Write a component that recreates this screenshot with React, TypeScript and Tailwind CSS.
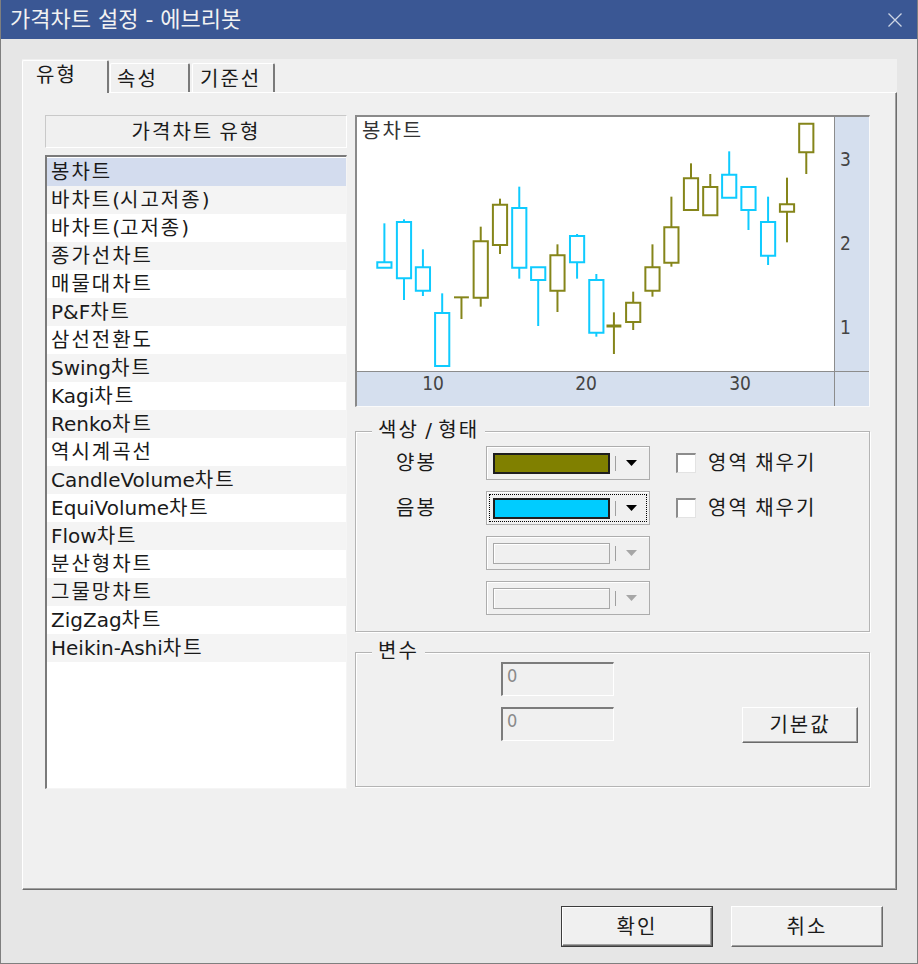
import React from 'react';

type Candle = [number, number, number, number, number, 'c' | 'o', boolean?];

// coordinates taken in the chart's own units (plot area 21..1432 x 21..783)
const candles: Candle[] = [
  [102, 340, 457, 473, 473, 'c'],
  [160, 328, 336, 505, 570, 'c'],
  [216, 418, 472, 542, 558, 'c'],
  [273, 550, 609, 768, 768, 'c'],
  [330, 562, 562, 562, 627, 'o'],
  [387, 350, 394, 563, 590, 'o'],
  [444, 266, 284, 405, 432, 'o'],
  [501, 230, 294, 473, 506, 'c'],
  [557, 472, 472, 510, 648, 'c'],
  [614, 403, 436, 542, 606, 'o'],
  [672, 372, 378, 457, 506, 'c'],
  [729, 492, 510, 668, 680, 'c'],
  [781, 607, 648, 648, 732, 'o', true],
  [838, 545, 578, 636, 660, 'o'],
  [895, 403, 472, 542, 560, 'o'],
  [951, 260, 352, 458, 470, 'o'],
  [1009, 160, 205, 300, 300, 'o'],
  [1066, 192, 231, 316, 316, 'o'],
  [1122, 124, 194, 263, 263, 'c'],
  [1179, 231, 231, 300, 360, 'c'],
  [1237, 260, 336, 437, 465, 'c'],
  [1293, 203, 283, 305, 397, 'o'],
  [1350, 41, 41, 127, 192, 'o'],
];

const chartTypes = [
  '봉차트',
  '바차트(시고저종)',
  '바차트(고저종)',
  '종가선차트',
  '매물대차트',
  'P&F차트',
  '삼선전환도',
  'Swing차트',
  'Kagi차트',
  'Renko차트',
  '역시계곡선',
  'CandleVolume차트',
  'EquiVolume차트',
  'Flow차트',
  '분산형차트',
  '그물망차트',
  'ZigZag차트',
  'Heikin-Ashi차트',
];

// hangul runs get a little extra spacing so they take the width of the dialog font
const T = ({ children }: { children: string }) => (
  <span>
    {children.split(/([\uAC00-\uD7A3]+)/).map((p, i) =>
      i % 2 ? (
        <span key={i} className="tracking-[2px]">
          {p}
        </span>
      ) : (
        p
      )
    )}
  </span>
);

const Candles = () => (
  <svg className="absolute inset-0 w-full h-full" viewBox="21 21 1411 762" preserveAspectRatio="none">
    {candles.map(([x, wt, bt, bb, wb, k, thick], i) => {
      const color = k === 'c' ? '#0fcbff' : '#85851a';
      return (
        <g key={i} stroke={color} fill="none">
          {wt < bt && <line x1={x} x2={x} y1={wt} y2={bt} strokeWidth={2} vectorEffect="non-scaling-stroke" />}
          {wb > bb && <line x1={x} x2={x} y1={bb} y2={wb} strokeWidth={2} vectorEffect="non-scaling-stroke" />}
          {bb > bt ? (
            <rect x={x - 21} y={bt} width={42} height={bb - bt} strokeWidth={2} vectorEffect="non-scaling-stroke" />
          ) : (
            <line x1={x - 22} x2={x + 22} y1={bt} y2={bt} strokeWidth={thick ? 3 : 2} vectorEffect="non-scaling-stroke" />
          )}
        </g>
      );
    })}
  </svg>
);

const Arrow = ({ disabled }: { disabled?: boolean }) => (
  <svg className="ml-[10px]" width="11" height="6" viewBox="0 0 11 6">
    <path d="M0 0H11L5.5 6Z" fill={disabled ? '#a6a6a6' : '#000'} />
  </svg>
);

const Combo = ({ swatch, focus }: { swatch?: string; focus?: boolean }) => (
  <div className="relative w-[164px] h-[34px] shrink-0 border border-[#adadad] shadow-[inset_1px_1px_0_#fff] bg-[#f0f0f0] flex items-center pl-[6px]">
    {swatch ? (
      <div className={`w-[117px] h-[21px] border-2 border-[#1e1e1e] ${swatch}`} />
    ) : (
      <div className="w-[117px] h-[21px] border border-[#a8a8a8] shadow-[inset_1px_1px_0_#fff]" />
    )}
    <div className="ml-[5px] w-px h-[15px] bg-[#a0a0a0]" />
    <Arrow disabled={!swatch} />
    {focus && <div className="absolute inset-[2px] border border-dotted border-black" />}
  </div>
);

const CheckFill = () => (
  <>
    <div className="ml-[26px] w-[20px] h-[20px] bg-white border-t-2 border-l-2 border-[#8c8c8c] border-r border-b border-r-[#e3e3e3] border-b-[#e3e3e3]" />
    <span className="ml-[12px]">
      <T>영역 채우기</T>
    </span>
  </>
);

const Field = () => (
  <div className="w-[113px] h-[34px] border-t-2 border-l-2 border-[#7c7c7c] border-r border-b border-r-white border-b-white bg-[#f0f0f0] pl-[4px] pt-[2px] text-[18px] leading-[20px] text-[#8a8a8a] font-['DejaVu_Sans_Condensed','DejaVu_Sans',sans-serif]">
    0
  </div>
);

const raised =
  'bg-[#f0f0f0] border border-t-white border-l-white border-r-[#6a6a6a] border-b-[#6a6a6a] shadow-[inset_-1px_-1px_0_#a0a0a0] flex items-center justify-center';

export default function App() {
  return (
    <div className="w-[918px] h-[964px] flex flex-col bg-[#e6e6e6] border-x border-b border-[#7f7f7f] text-[#1a1a1a] text-[20px] overflow-hidden font-['DejaVu_Sans','Noto_Sans_CJK_KR',sans-serif]">
      {/* title bar */}
      <div className="h-[39px] shrink-0 bg-[#3a5794] flex items-center justify-between pl-[9px] pr-[15px] text-[22px] text-[#f2f2f2]">
        <span>가격차트 설정 - 에브리봇</span>
        <svg width="14" height="14" viewBox="0 0 14 14">
          <path d="M0.5 0.5L13.5 13.5M13.5 0.5L0.5 13.5" stroke="#cdd5e4" strokeWidth="1.3" />
        </svg>
      </div>

      <div className="flex-1 flex flex-col pl-[21px] pt-[20px]">
        {/* tab control */}
        <div className="w-[875px] h-[831px] flex flex-col bg-[#f0f0f0]">
          <div className="h-[33px] shrink-0 flex items-end">
            <div className="relative z-10 h-[33px] -mb-px w-[87px] border-l border-t border-white border-r-2 border-r-[#7a7a7a] rounded-t-[2px] bg-[#f0f0f0] pl-[13px] pt-[2px] leading-[24px]">
              <T>유형</T>
            </div>
            <div className="ml-px h-[29px] w-[80px] border-l border-t border-white border-r-2 border-r-[#7a7a7a] rounded-t-[2px] pl-[6px] pt-[3px] leading-[24px]">
              <T>속성</T>
            </div>
            <div className="ml-[2px] h-[29px] w-[83px] border-l border-t border-white border-r-2 border-r-[#7a7a7a] rounded-t-[2px] pl-[7px] pt-[3px] leading-[24px]">
              <T>기준선</T>
            </div>
          </div>

          <div className="flex-1 flex gap-[8px] pl-[22px] pt-[22px] border-t border-l border-white border-r border-b border-r-[#6d6d6d] border-b-[#6d6d6d] shadow-[inset_-1px_-1px_0_#a0a0a0]">
            {/* left: chart type list */}
            <div className="w-[302px] flex flex-col">
              <div className="h-[33px] border-t border-l border-[#c9c9c9] border-r border-b border-r-white border-b-white flex items-center justify-center">
                <T>가격차트 유형</T>
              </div>
              <div className="mt-[7px] h-[634px] bg-white border-t-2 border-l-2 border-[#7a7a7a] border-r border-b border-r-[#f5f5f5] border-b-[#f5f5f5] pt-[1px]">
                {chartTypes.map((t, i) => (
                  <div
                    key={t}
                    className={`h-[28px] leading-[28px] pl-[4px] ${
                      i === 0 ? 'bg-[#d3dcee]' : i % 2 === 1 ? 'bg-[#f4f4f4]' : 'bg-white'
                    }`}
                  >
                    <T>{t}</T>
                  </div>
                ))}
              </div>
            </div>

            {/* right */}
            <div className="w-[515px] flex flex-col">
              {/* preview chart */}
              <div className="h-[292px] flex flex-col border-t-2 border-l-2 border-[#8a8a8a] border-r border-b border-r-[#fafafa] border-b-[#fafafa]">
                <div className="flex-1 flex">
                  <div className="relative flex-1 bg-white">
                    <span className="absolute left-[5px] top-[2px] leading-[24px] text-[#333]">
                      <T>봉차트</T>
                    </span>
                    <Candles />
                  </div>
                  <div className="relative w-[35px] bg-[#d5dfee] border-l border-[#8c8c8c] text-[#444] font-['DejaVu_Sans_Condensed','DejaVu_Sans',sans-serif] text-[19px]">
                    <span className="absolute left-[5px] top-[42px] -translate-y-1/2">3</span>
                    <span className="absolute left-[5px] top-[126px] -translate-y-1/2">2</span>
                    <span className="absolute left-[5px] top-[210px] -translate-y-1/2">1</span>
                  </div>
                </div>
                <div className="h-[35px] flex border-t border-[#8c8c8c] bg-[#d5dfee]">
                  <div className="relative flex-1 text-[#444] font-['DejaVu_Sans_Condensed','DejaVu_Sans',sans-serif] text-[19px]">
                    <span className="absolute left-[76px] top-[11px] -translate-x-1/2 -translate-y-1/2">10</span>
                    <span className="absolute left-[229px] top-[11px] -translate-x-1/2 -translate-y-1/2">20</span>
                    <span className="absolute left-[383px] top-[11px] -translate-x-1/2 -translate-y-1/2">30</span>
                  </div>
                  <div className="w-[35px] border-l border-[#8c8c8c]" />
                </div>
              </div>

              {/* colour / shape */}
              <div className="relative mt-[24px] h-[201px] border border-[#b4b4b4] shadow-[inset_1px_1px_0_#fff,1px_1px_0_#fff]">
                <span className="absolute -top-[13px] left-[16px] px-[6px] bg-[#f0f0f0] leading-[22px]">
                  <T>색상 / 형태</T>
                </span>
                <div className="flex flex-col gap-[11px] pt-[14px]">
                  <div className="h-[34px] flex items-center">
                    <span className="w-[130px] pl-[40px]">
                      <T>양봉</T>
                    </span>
                    <Combo swatch="bg-[#808000]" />
                    <CheckFill />
                  </div>
                  <div className="h-[34px] flex items-center">
                    <span className="w-[130px] pl-[40px]">
                      <T>음봉</T>
                    </span>
                    <Combo swatch="bg-[#00ccff]" focus />
                    <CheckFill />
                  </div>
                  <div className="h-[34px] flex items-center pl-[130px]">
                    <Combo />
                  </div>
                  <div className="h-[34px] flex items-center pl-[130px]">
                    <Combo />
                  </div>
                </div>
              </div>

              {/* variables */}
              <div className="relative mt-[20px] h-[135px] border border-[#b4b4b4] shadow-[inset_1px_1px_0_#fff,1px_1px_0_#fff]">
                <span className="absolute -top-[13px] left-[16px] px-[6px] bg-[#f0f0f0] leading-[22px]">
                  <T>변수</T>
                </span>
                <div className="flex flex-col gap-[11px] pt-[9px] pl-[145px]">
                  <Field />
                  <div className="flex items-start">
                    <Field />
                    <div className={`ml-[128px] w-[116px] h-[36px] ${raised}`}>
                      <T>기본값</T>
                    </div>
                  </div>
                </div>
              </div>
            </div>
          </div>
        </div>

        {/* dialog buttons */}
        <div className="flex justify-end gap-[18px] pr-[34px] mt-[16px]">
          <div className="w-[152px] h-[41px] border border-[#3c3c3c]">
            <div className={`w-full h-full ${raised}`}>
              <T>확인</T>
            </div>
          </div>
          <div className={`w-[152px] h-[41px] ${raised}`}>
            <T>취소</T>
          </div>
        </div>
      </div>
    </div>
  );
}
